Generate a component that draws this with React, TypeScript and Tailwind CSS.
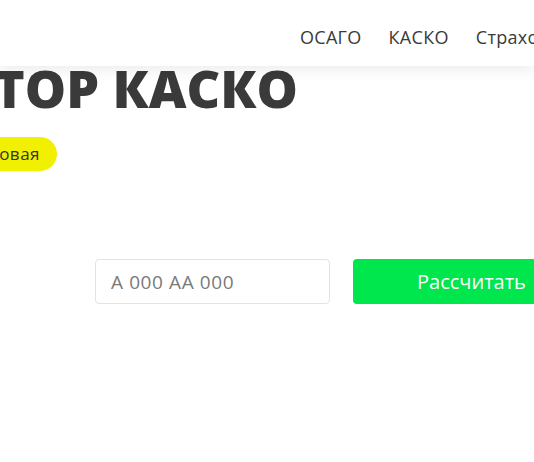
export default function App() {
  return (
    <div
      className="relative w-[534px] h-[462px] overflow-hidden bg-white text-[#333]"
      style={{ fontFamily: '"Open Sans", "Liberation Sans", sans-serif' }}
    >
      <header className="relative z-10 h-[66px] bg-white shadow-[0_4px_14px_rgba(0,0,0,0.08)]">
        <nav className="flex h-full items-center gap-[27px] whitespace-nowrap pl-[300px] pt-[8px] text-[18px] tracking-[0.3px] text-[#3a3a3a]">
          <span>ОСАГО</span>
          <span>КАСКО</span>
          <span>Страхование</span>
        </nav>
      </header>

      <section className="whitespace-nowrap">
        <div className="flex w-[298px] justify-end">
          <h1 className="mt-[-8px] text-[52px] font-extrabold leading-[60px] text-[#3a3a3a]">
            КАЛЬКУЛЯТОР КАСКО
          </h1>
        </div>
        <div className="mt-[19px] flex w-[57px] justify-end">
          <span className="shrink-0 rounded-full bg-[#f0f000] py-[6px] pl-[22px] pr-[17px] text-[17px] leading-[22px] tracking-[0.5px] text-[#333]">
            Страховая
          </span>
        </div>

        <div className="mt-[88px] flex items-center pl-[95px]">
          <input
            className="h-[45px] w-[235px] rounded-[4px] border border-[#e3e3e3] px-[15px] text-[19px] tracking-[0.6px] text-[#333] placeholder:text-[#7a7a7a] outline-none"
            placeholder="A 000 AA 000"
          />
          <button className="ml-[23px] h-[45px] w-[220px] shrink-0 rounded-[4px] bg-[#00e64d] pl-[64px] text-left text-[20px] text-white">
            Рассчитать
          </button>
        </div>
      </section>
    </div>
  );
}
